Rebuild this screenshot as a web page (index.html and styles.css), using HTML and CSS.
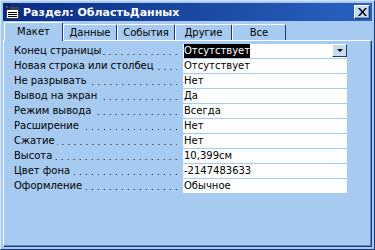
FILE: index.html
```html
<!DOCTYPE html>
<html lang="ru">
<head>
    <meta charset="UTF-8">
    <title>Раздел: ОбластьДанных</title>
    <link rel="stylesheet" href="styles.css">
</head>
<body>
    <div class="window">
        <div class="titlebar">
            <svg class="app-icon" width="16" height="16" viewBox="0 0 16 16">
                <rect x="2.5" y="3.5" width="12" height="11" fill="#fff" stroke="#404040"/>
                <rect x="2" y="3" width="13" height="3" fill="#404040"/>
                <line x1="4" y1="8.5" x2="13" y2="8.5" stroke="#000"/>
                <line x1="4" y1="10.5" x2="13" y2="10.5" stroke="#000"/>
                <line x1="4" y1="12.5" x2="13" y2="12.5" stroke="#000"/>
                <path d="M1 1h4v4H1z" fill="#2050c0" stroke="#000" stroke-width="0.8"/>
            </svg>
            <span class="title">Раздел: ОбластьДанных</span>
            <button class="close-btn">
                <svg width="9" height="8" viewBox="0 0 9 8">
                    <path d="M0 0h2l2.5 3 2.5-3h2L5.5 4 9 8H7L4.5 5 2 8H0l3.5-4z" fill="#000"/>
                </svg>
            </button>
        </div>

        <div class="tabs">
            <div class="tab active">Макет</div>
            <div class="tab">Данные</div>
            <div class="tab">События</div>
            <div class="tab">Другие</div>
            <div class="tab">Все</div>
        </div>

        <div class="panel">
            <div class="row">
                <span class="label">Конец страницы</span><span class="leader"></span>
                <div class="value combo"><span class="selected">Отсутствует</span><span class="drop-btn"></span></div>
            </div>
            <div class="row">
                <span class="label">Новая строка или столбец</span><span class="leader"></span>
                <div class="value">Отсутствует</div>
            </div>
            <div class="row">
                <span class="label">Не разрывать</span><span class="leader"></span>
                <div class="value">Нет</div>
            </div>
            <div class="row">
                <span class="label">Вывод на экран</span><span class="leader"></span>
                <div class="value">Да</div>
            </div>
            <div class="row">
                <span class="label">Режим вывода</span><span class="leader"></span>
                <div class="value">Всегда</div>
            </div>
            <div class="row">
                <span class="label">Расширение</span><span class="leader"></span>
                <div class="value">Нет</div>
            </div>
            <div class="row">
                <span class="label">Сжатие</span><span class="leader"></span>
                <div class="value">Нет</div>
            </div>
            <div class="row">
                <span class="label">Высота</span><span class="leader"></span>
                <div class="value">10,399см</div>
            </div>
            <div class="row">
                <span class="label">Цвет фона</span><span class="leader"></span>
                <div class="value">-2147483633</div>
            </div>
            <div class="row">
                <span class="label">Оформление</span><span class="leader"></span>
                <div class="value">Обычное</div>
            </div>
        </div>
    </div>
</body>
</html>
```
FILE: styles.css
```css
body {
    margin: 0;
    background: #a6caf0;
    font-family: "DejaVu Sans", sans-serif;
    font-size: 10px;
}

.window {
    width: 375px;
    height: 250px;
    box-sizing: border-box;
    padding: 2px;
    background: #a6caf0;
    border-top: 1px solid #d6e6fa;
    border-left: 1px solid #d6e6fa;
    border-right: 1px solid #1c3a78;
    border-bottom: 1px solid #1c3a78;
    display: flex;
    flex-direction: column;
}

.titlebar {
    height: 18px;
    display: flex;
    align-items: center;
    background: linear-gradient(90deg, #0a2c80, #2a62c2);
    color: white;
    padding: 0 2px 0 1px;
}

.app-icon {
    margin-right: 3px;
}

.title {
    font-weight: bold;
    font-size: 11px;
    flex: 1;
}

.close-btn {
    width: 16px;
    height: 14px;
    padding: 0;
    background: #c6daf2;
    border-top: 1px solid #fff;
    border-left: 1px solid #fff;
    border-right: 1px solid #1c3a78;
    border-bottom: 1px solid #1c3a78;
    box-shadow: inset -1px -1px 0 #7a9ac8;
    display: flex;
    align-items: center;
    justify-content: center;
}

/* tabs */
.tabs {
    display: flex;
    height: 19px;
    align-items: flex-end;
    padding-left: 1px;
}

.tab {
    height: 16px;
    line-height: 16px;
    box-sizing: border-box;
    border-top: 1px solid #fff;
    border-left: 1px solid #fff;
    border-right: 1px solid #1c3a78;
    border-radius: 2px 2px 0 0;
    text-align: center;
    color: #000;
}

.tab:nth-child(1) { width: 59px; }
.tab:nth-child(2) { width: 54px; }
.tab:nth-child(3) { width: 58px; }
.tab:nth-child(4) { width: 57px; }
.tab:nth-child(5) { width: 54px; }

.tab.active {
    height: 19px;
    line-height: 18px;
    margin-bottom: -1px;
    background: #a6caf0;
    position: relative;
    z-index: 1;
}

/* property list */
.panel {
    flex: 1;
    border-top: 1px solid #fff;
    border-left: 1px solid #fff;
    border-right: 1px solid #1c3a78;
    border-bottom: 1px solid #1c3a78;
    box-shadow: inset -1px -1px 0 #6488c4;
    padding: 3px 0 0 10px;
}

.row {
    display: flex;
    width: 333px;
    height: 14px;
    margin-bottom: 1px;
}

.label {
    flex: 0 0 auto;
    line-height: 14px;
    white-space: nowrap;
    color: #000;
}

.leader {
    flex: 1;
    margin: 0 6px 0 2px;
    background-image: linear-gradient(90deg, transparent 5px, #1a1a1a 5px);
    background-size: 6px 1px;
    background-repeat: repeat-x;
    background-position: right 0 bottom 3px;
}

.value {
    flex: 0 0 164px;
    background: #fff;
    line-height: 14px;
    padding-left: 1px;
    box-sizing: border-box;
    white-space: nowrap;
    color: #000;
}

.combo {
    display: flex;
    justify-content: space-between;
}

.selected {
    background: #000;
    color: #fff;
}

.drop-btn {
    width: 15px;
    height: 13px;
    box-sizing: border-box;
    background: #c6daf2;
    border-top: 1px solid #fff;
    border-left: 1px solid #fff;
    border-right: 1px solid #1c3a78;
    border-bottom: 1px solid #1c3a78;
    position: relative;
}

.drop-btn::after {
    content: "";
    position: absolute;
    left: 4px;
    top: 4px;
    border-left: 3px solid transparent;
    border-right: 3px solid transparent;
    border-top: 3px solid #000;
}
```
